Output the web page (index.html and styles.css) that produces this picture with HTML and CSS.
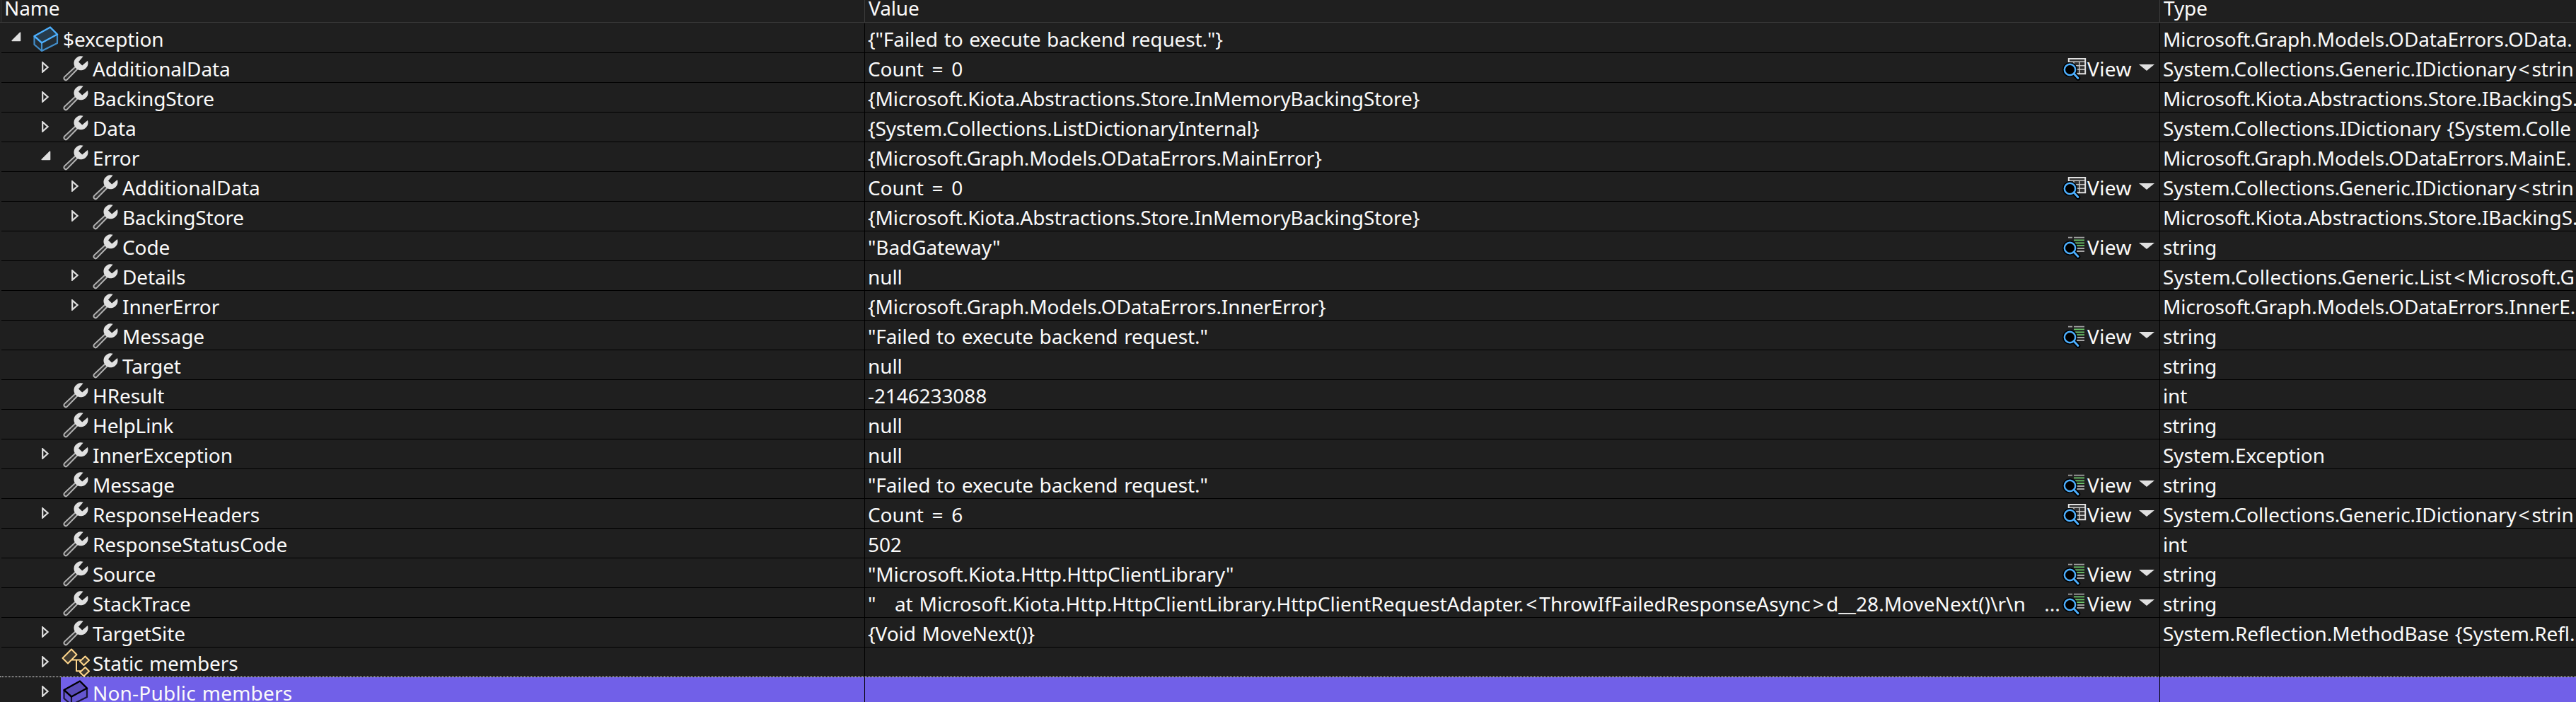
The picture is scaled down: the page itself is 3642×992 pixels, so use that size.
FILE: index.html
```
<!DOCTYPE html>
<html lang="en">
<head>
    <meta charset="UTF-8">
    <meta name="viewport" content="width=device-width, initial-scale=1.0">
    <title>Locals</title>
    <link rel="stylesheet" href="styles.css">
</head>
<body>

    <!-- Icon definitions -->
    <svg class="icon-defs" width="0" height="0">
        <symbol id="open" viewBox="0 0 14 14">
            <path d="M12.5 1.2V12.5H1.2Z" fill="#e0e0e0" stroke="#e0e0e0" stroke-width="1.6" stroke-linejoin="round"/>
        </symbol>
        <symbol id="closed" viewBox="0 0 11 16">
            <path d="M1.2 1.4V14.6L8.6 8Z" fill="none" stroke="#e0e0e0" stroke-width="2.2"/>
        </symbol>
        <symbol id="wrench" viewBox="0 0 36 36">
            <path d="M18.5 14.5L2.2 29.6a2.6 2.6 0 0 0 3.8 3.8L21.5 17.5" fill="#e0e0e0" fill-opacity=".1" stroke="#b4b4b4" stroke-width="2"/>
            <path d="M28.6 .8A10 10 0 1 0 34.9 7L27.2 13.6L22 8.6Z" fill="#e0e0e0"/>
        </symbol>
        <symbol id="box" viewBox="0 0 36 36">
            <path d="M1.5 14.5L12 23.5L34 11.5V24L12 35L1.5 26Z" fill="currentColor" fill-opacity=".1"/>
            <path d="M1.5 14.5V26L12 35L34 24V11.5M12 23.5V35" fill="none" stroke="currentColor" stroke-opacity=".75" stroke-width="2.2" stroke-linejoin="round"/>
            <path d="M24 1.5L34 11.5L12 23.5L1.5 14Z" fill="currentColor" fill-opacity=".2" stroke="currentColor" stroke-width="2.4" stroke-linejoin="round"/>
        </symbol>
        <symbol id="class" viewBox="0 0 40 40">
            <g fill="#ffd78c" fill-opacity=".15" stroke="#ffd78c" stroke-width="2" stroke-linejoin="round">
                <path d="M14 1.5L21.5 9L9 21.5L1.5 14Z"/>
                <path d="M33.5 11.5L39 17L31.5 24L26 18.5Z"/>
                <path d="M33.5 27L39 32.5L31.5 39.5L26 34Z"/>
                <path d="M14.5 16.5H27M21 16.5V32.2H27" fill="none"/>
            </g>
        </symbol>
        <symbol id="glass" viewBox="0 0 34 32">
            <circle cx="10.5" cy="16.5" r="8" fill="#000" stroke="#000" stroke-width="5"/>
            <path d="M16 22L22 28.5" stroke="#000" stroke-width="6.5" stroke-linecap="round"/>
            <circle cx="10.5" cy="16.5" r="7.7" fill="#000" stroke="#4db0ff" stroke-width="2.4"/>
            <path d="M16 22L22 28.5" stroke="#4db0ff" stroke-width="2.8" stroke-linecap="round"/>
        </symbol>
        <symbol id="view-table" viewBox="0 0 34 32">
            <path d="M8.8 1H32.2V22.2H8.8Z" fill="#e0e0e0" fill-opacity=".1"/>
            <path d="M9 5.2H32M14 10.8H32M14 16.2H32M16 5V22M23.8 5V22" fill="none" stroke="#c4c4c4" stroke-width="1.5"/>
            <path d="M8.8 6V1H32.2V22.2H18" fill="none" stroke="#e0e0e0" stroke-width="2"/>
            <use href="#glass"/>
        </symbol>
        <symbol id="view-text" viewBox="0 0 34 32">
            <path d="M8 1.6H14M16 1.6H31M18 17H31M20 21H31" stroke="#a4a4a4" stroke-width="1.8"/>
            <path d="M16 5.4H31M18 9.3H31M20 13.2H31" stroke="#6cc96c" stroke-width="1.8"/>
            <use href="#glass"/>
        </symbol>
        <symbol id="drop" viewBox="0 0 22 9">
            <path d="M0 0H22L11 9Z" fill="#e0e0e0"/>
        </symbol>
    </svg>

    <div class="locals">
        <div class="header">
            <div class="name">Name</div>
            <div class="value">Value</div>
            <div class="type">Type</div>
        </div>

        <div class="row">
            <div class="name"><span class="expander"><svg class="open"><use href="#open"/></svg></span><svg class="icon blue"><use href="#box"/></svg><span class="label">$exception</span></div>
            <div class="value"><span class="text">{"Failed to execute backend request."}</span></div>
            <div class="type">Microsoft.Graph.Models.ODataErrors.OData.</div>
        </div>
        <div class="row level-1">
            <div class="name"><span class="expander"><svg class="closed"><use href="#closed"/></svg></span><svg class="icon"><use href="#wrench"/></svg><span class="label">AdditionalData</span></div>
            <div class="value"><span class="text">Count <span class="op">=</span> 0</span><span class="view"><svg class="view-icon"><use href="#view-table"/></svg>View<svg class="drop"><use href="#drop"/></svg></span></div>
            <div class="type">System.Collections.Generic.IDictionary<span class="op">&lt;</span>strin</div>
        </div>
        <div class="row level-1">
            <div class="name"><span class="expander"><svg class="closed"><use href="#closed"/></svg></span><svg class="icon"><use href="#wrench"/></svg><span class="label">BackingStore</span></div>
            <div class="value"><span class="text">{Microsoft.Kiota.Abstractions.Store.InMemoryBackingStore}</span></div>
            <div class="type">Microsoft.Kiota.Abstractions.Store.IBackingS.</div>
        </div>
        <div class="row level-1">
            <div class="name"><span class="expander"><svg class="closed"><use href="#closed"/></svg></span><svg class="icon"><use href="#wrench"/></svg><span class="label">Data</span></div>
            <div class="value"><span class="text">{System.Collections.ListDictionaryInternal}</span></div>
            <div class="type">System.Collections.IDictionary {System.Colle</div>
        </div>
        <div class="row level-1">
            <div class="name"><span class="expander"><svg class="open"><use href="#open"/></svg></span><svg class="icon"><use href="#wrench"/></svg><span class="label">Error</span></div>
            <div class="value"><span class="text">{Microsoft.Graph.Models.ODataErrors.MainError}</span></div>
            <div class="type">Microsoft.Graph.Models.ODataErrors.MainE.</div>
        </div>
        <div class="row level-2">
            <div class="name"><span class="expander"><svg class="closed"><use href="#closed"/></svg></span><svg class="icon"><use href="#wrench"/></svg><span class="label">AdditionalData</span></div>
            <div class="value"><span class="text">Count <span class="op">=</span> 0</span><span class="view"><svg class="view-icon"><use href="#view-table"/></svg>View<svg class="drop"><use href="#drop"/></svg></span></div>
            <div class="type">System.Collections.Generic.IDictionary<span class="op">&lt;</span>strin</div>
        </div>
        <div class="row level-2">
            <div class="name"><span class="expander"><svg class="closed"><use href="#closed"/></svg></span><svg class="icon"><use href="#wrench"/></svg><span class="label">BackingStore</span></div>
            <div class="value"><span class="text">{Microsoft.Kiota.Abstractions.Store.InMemoryBackingStore}</span></div>
            <div class="type">Microsoft.Kiota.Abstractions.Store.IBackingS.</div>
        </div>
        <div class="row level-2">
            <div class="name"><span class="expander"></span><svg class="icon"><use href="#wrench"/></svg><span class="label">Code</span></div>
            <div class="value"><span class="text">"BadGateway"</span><span class="view"><svg class="view-icon"><use href="#view-text"/></svg>View<svg class="drop"><use href="#drop"/></svg></span></div>
            <div class="type">string</div>
        </div>
        <div class="row level-2">
            <div class="name"><span class="expander"><svg class="closed"><use href="#closed"/></svg></span><svg class="icon"><use href="#wrench"/></svg><span class="label">Details</span></div>
            <div class="value"><span class="text">null</span></div>
            <div class="type list">System.Collections.Generic.List<span class="op">&lt;</span>Microsoft.G</div>
        </div>
        <div class="row level-2">
            <div class="name"><span class="expander"><svg class="closed"><use href="#closed"/></svg></span><svg class="icon"><use href="#wrench"/></svg><span class="label">InnerError</span></div>
            <div class="value"><span class="text">{Microsoft.Graph.Models.ODataErrors.InnerError}</span></div>
            <div class="type">Microsoft.Graph.Models.ODataErrors.InnerE.</div>
        </div>
        <div class="row level-2">
            <div class="name"><span class="expander"></span><svg class="icon"><use href="#wrench"/></svg><span class="label">Message</span></div>
            <div class="value"><span class="text">"Failed to execute backend request."</span><span class="view"><svg class="view-icon"><use href="#view-text"/></svg>View<svg class="drop"><use href="#drop"/></svg></span></div>
            <div class="type">string</div>
        </div>
        <div class="row level-2">
            <div class="name"><span class="expander"></span><svg class="icon"><use href="#wrench"/></svg><span class="label">Target</span></div>
            <div class="value"><span class="text">null</span></div>
            <div class="type">string</div>
        </div>
        <div class="row level-1">
            <div class="name"><span class="expander"></span><svg class="icon"><use href="#wrench"/></svg><span class="label">HResult</span></div>
            <div class="value"><span class="text">-2146233088</span></div>
            <div class="type">int</div>
        </div>
        <div class="row level-1">
            <div class="name"><span class="expander"></span><svg class="icon"><use href="#wrench"/></svg><span class="label">HelpLink</span></div>
            <div class="value"><span class="text">null</span></div>
            <div class="type">string</div>
        </div>
        <div class="row level-1">
            <div class="name"><span class="expander"><svg class="closed"><use href="#closed"/></svg></span><svg class="icon"><use href="#wrench"/></svg><span class="label">InnerException</span></div>
            <div class="value"><span class="text">null</span></div>
            <div class="type">System.Exception</div>
        </div>
        <div class="row level-1">
            <div class="name"><span class="expander"></span><svg class="icon"><use href="#wrench"/></svg><span class="label">Message</span></div>
            <div class="value"><span class="text">"Failed to execute backend request."</span><span class="view"><svg class="view-icon"><use href="#view-text"/></svg>View<svg class="drop"><use href="#drop"/></svg></span></div>
            <div class="type">string</div>
        </div>
        <div class="row level-1">
            <div class="name"><span class="expander"><svg class="closed"><use href="#closed"/></svg></span><svg class="icon"><use href="#wrench"/></svg><span class="label">ResponseHeaders</span></div>
            <div class="value"><span class="text">Count <span class="op">=</span> 6</span><span class="view"><svg class="view-icon"><use href="#view-table"/></svg>View<svg class="drop"><use href="#drop"/></svg></span></div>
            <div class="type">System.Collections.Generic.IDictionary<span class="op">&lt;</span>strin</div>
        </div>
        <div class="row level-1">
            <div class="name"><span class="expander"></span><svg class="icon"><use href="#wrench"/></svg><span class="label">ResponseStatusCode</span></div>
            <div class="value"><span class="text">502</span></div>
            <div class="type">int</div>
        </div>
        <div class="row level-1">
            <div class="name"><span class="expander"></span><svg class="icon"><use href="#wrench"/></svg><span class="label">Source</span></div>
            <div class="value"><span class="text">"Microsoft.Kiota.Http.HttpClientLibrary"</span><span class="view"><svg class="view-icon"><use href="#view-text"/></svg>View<svg class="drop"><use href="#drop"/></svg></span></div>
            <div class="type">string</div>
        </div>
        <div class="row level-1">
            <div class="name"><span class="expander"></span><svg class="icon"><use href="#wrench"/></svg><span class="label">StackTrace</span></div>
            <div class="value"><span class="text trace">"   at Microsoft.Kiota.Http.HttpClientLibrary.HttpClientRequestAdapter.<span class="op">&lt;</span>ThrowIfFailedResponseAsync<span class="op">&gt;</span>d__28.MoveNext()\r\n   ...</span><span class="view"><svg class="view-icon"><use href="#view-text"/></svg>View<svg class="drop"><use href="#drop"/></svg></span></div>
            <div class="type">string</div>
        </div>
        <div class="row level-1">
            <div class="name"><span class="expander"><svg class="closed"><use href="#closed"/></svg></span><svg class="icon"><use href="#wrench"/></svg><span class="label">TargetSite</span></div>
            <div class="value"><span class="text">{Void MoveNext()}</span></div>
            <div class="type">System.Reflection.MethodBase {System.Refl..</div>
        </div>
        <div class="row level-1 before-selected">
            <div class="name"><span class="expander"><svg class="closed"><use href="#closed"/></svg></span><svg class="icon class-icon"><use href="#class"/></svg><span class="label">Static members</span></div>
            <div class="value"></div>
            <div class="type"></div>
        </div>
        <div class="row level-1 selected">
            <div class="name"><span class="expander"><svg class="closed"><use href="#closed"/></svg></span><svg class="icon"><use href="#box"/></svg><span class="label">Non-Public members</span></div>
            <div class="value"></div>
            <div class="type"></div>
        </div>
    </div>

</body>
</html>
```
FILE: styles.css
```
body {
    margin: 0;
    height: 992px;
    overflow: hidden;
    background-color: #1f1f1f;
    color: #fafafa;
    font-family: "Noto Sans", sans-serif;
    font-size: 28px;
    letter-spacing: -0.1px;
    word-spacing: 1.5px;
}
.icon-defs {
    display: block;
}
.header,
.row {
    display: grid;
    grid-template-columns: 1222px 1831px 1fr;
    box-sizing: border-box;
    white-space: pre;
}
.header {
    height: 32px;
    border-bottom: 1px solid #3d3d3d;
    margin-bottom: 1px;
    line-height: 22px;
}
.header .name {
    border-left: 1px solid #3d3d3d;
    margin-left: 1px;
    padding-left: 4px;
}
.header .value,
.header .type {
    border-left: 1px solid #3d3d3d;
    padding-left: 5px;
}
.row {
    height: 42px;
    line-height: 44px;
    border-bottom: 1px solid #000;
    margin-left: 2px;
    grid-template-columns: 1220px 1831px 1fr;
}
.row .name {
    display: flex;
    min-width: 0;
    padding-left: 8px;
}
.level-1 .name {
    padding-left: 50px;
}
.level-2 .name {
    padding-left: 92px;
}
.row .value,
.row .type {
    min-width: 0;
    overflow: hidden;
    border-left: 1px solid #000;
    padding-left: 4px;
}
.row .value {
    display: flex;
}
.row .list {
    letter-spacing: 0.1px;
}
.expander {
    flex: none;
    width: 37px;
}
.open {
    display: block;
    width: 14px;
    height: 14px;
    margin: 12px 0 0 6px;
}
.closed {
    display: block;
    width: 11px;
    height: 16px;
    margin: 12px 0 0 7px;
}
.icon {
    flex: none;
    width: 36px;
    height: 36px;
    margin-top: 4px;
    margin-right: 6px;
}
.blue {
    color: #4db0ff;
}
.class-icon {
    width: 40px;
    height: 40px;
    margin: 1px 4px 0 -2px;
}
.text {
    flex: 1;
    min-width: 0;
    overflow: hidden;
}
.trace {
    letter-spacing: 0.03px;
}
.op {
    padding: 0 3px;
}
.view {
    display: flex;
    flex: none;
    width: 137px;
    letter-spacing: 0.4px;
}
.view-icon {
    width: 34px;
    height: 32px;
    margin: 7px 1px 0 0;
}
.drop {
    width: 22px;
    height: 9px;
    margin: 16px 7px 0 auto;
}

/* Focus line above the selected row */
.before-selected {
    height: 41px;
    border-bottom: 0;
}
.selected {
    height: 36px;
    margin-left: 0;
    grid-template-columns: 1222px 1831px 1fr;
    border-top: 1px dotted #fff;
    border-bottom: 0;
    overflow: hidden;
    letter-spacing: 0.2px;
}
.selected .name {
    padding-left: 52px;
    background: linear-gradient(to right, #1f1f1f 86px, #7160e8 86px);
}
.selected .icon {
    color: #000;
}
.selected .value,
.selected .type {
    background-color: #7160e8;
}
```
